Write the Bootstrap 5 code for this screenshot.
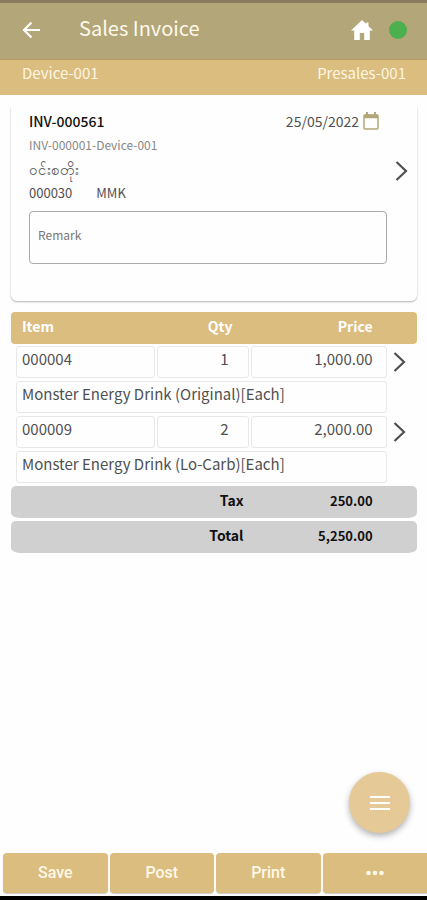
<!DOCTYPE html>
<html lang="en">
<head>
<meta charset="utf-8">
<meta name="viewport" content="width=device-width, initial-scale=1">
<title>Sales Invoice</title>
<link href="https://cdn.jsdelivr.net/npm/bootstrap@5.3.0/dist/css/bootstrap.min.css" rel="stylesheet">
<style>
  :root { --sand: #dcbd80; --olive: #b3a678; }
  body { font-family: "Noto Sans CJK SC", "Noto Sans", sans-serif; font-size: 15px; line-height: 20px; color: #505050; background: #fefefe; }
  svg { display: block; }
  .icon-btn { border: 0; background: none; padding: 0; color: inherit; }
  .app-bar { height: 60px; background: var(--olive); border-top: 3px solid #8a7b60; border-bottom: 1px solid #b39c68; color: #fff; padding: 0 20px 3px 20px; }
  .app-title { font-size: 20px; line-height: 28px; font-weight: 400; color: #fdf9ec; margin-left: 37px; padding-bottom: 3px; }
  .status-dot { width: 18px; height: 18px; background: #4caf50; }
  .device-bar { height: 35px; background: var(--sand); color: #fdf6e0; font-size: 15px; padding: 3px 21px 10px 22px; }
  .page-body { padding: 12px 10px 0 11px; }
  .invoice-card { border-radius: 0 0 6px 6px; box-shadow: 0 1px 2px rgba(0,0,0,.3); clip-path: inset(0 -4px -4px -4px); padding: 4px 30px 37px 18px; min-height: 193px; background: #fefefe; }
  .inv-no { font-size: 14px; font-weight: 500; color: #111; }
  .inv-date { font-size: 14px; }
  .inv-ref { font-size: 12px; color: #888; margin-top: 4px; }
  .inv-line { font-size: 13px; margin-top: 4px; }
  .inv-name { font-size: 15px; }
  .card-next { position: absolute; right: 9px; top: 54px; }
  .remark-box { height: 53px; border: 1px solid #aaa; border-radius: 4px; padding: 13px 8px; font-size: 12px; line-height: 20px; resize: none; background: transparent; margin-top: 8px; }
  .remark-box::placeholder { color: #777; }
  .items { table-layout: fixed; border-collapse: separate; border-spacing: 0; margin-top: 11px; }
  .items th, .items td { padding: 0; }
  .items thead th { height: 32px; background: var(--sand); color: #fff; font-size: 14px; font-weight: 700; padding-bottom: 4px; }
  .items thead th:first-child { border-radius: 4px 0 0 4px; padding-left: 11px; }
  .items thead th:last-child { border-radius: 0 4px 4px 0; }
  .items thead .th-qty { padding-right: 18px; }
  .items thead .th-price { padding-right: 16px; }
  .col-item { width: 36%; } .col-qty { width: 23%; } .col-price { width: 34%; }
  .items tbody td { padding: 2px 2px 1px 0; }
  .items tbody td:first-child { padding-left: 5px; }
  .cell-box { height: 32px; border: 1px solid #e8e8e8; border-radius: 3px; padding: 2px 13px 8px 5px; white-space: nowrap; }
  .qty-box { padding-right: 19px; }
  .items tfoot td, .items tfoot th { height: 35px; border-bottom: 3px solid #fefefe; background: #d0d0d0; background-clip: padding-box; color: #111; font-size: 13px; font-weight: 700; padding-bottom: 2px; }
  .items tfoot th { border-radius: 5px 0 0 8px; padding-right: 7px; font-size: 14px; padding-bottom: 4px; }
  .items tfoot td { padding-right: 16px; }
  .items tfoot td:last-child { border-radius: 0 5px 8px 0; padding: 0; }
  .items .tfoot-gap td { height: 2px; border: 0; background: none; padding: 0; }
  .menu-fab { width: 61px; height: 61px; background: #e5ca98; color: #fff; box-shadow: 0 3px 6px rgba(0,0,0,.3); margin: 0 17px 20px auto; }
  .action-bar { padding: 0 0 3px 3px; gap: 2px; border-bottom: 4px solid #000; }
  .action-btn { flex: 1 1 0; height: 40px; border: 0; border-radius: 4px; background: var(--sand); color: #fdf8e8; font-family: Roboto, sans-serif; font-size: 16px; font-weight: 500; box-shadow: 0 1px 1px rgba(0,0,0,.2); padding: 0; }
  .action-btn:last-child { border-radius: 4px 0 0 4px; }
</style>
</head>
<body class="d-flex flex-column min-vh-100">
<header>
  <div class="app-bar d-flex align-items-center">
    <button type="button" class="icon-btn" aria-label="Back">
      <svg width="22" height="20" viewBox="0 0 22 20" fill="none" stroke="currentColor" stroke-width="2.2"><path d="M20 10H4M11.500 2.500L4 10l7.500 7.500"/></svg>
    </button>
    <h1 class="app-title mb-0 me-auto">Sales Invoice</h1>
    <a href="#" class="text-white me-3" aria-label="Home">
      <svg width="22" height="20" viewBox="0 0 22 20" fill="currentColor"><path d="M11 0L0 10.500h3.200V20h5.600v-7h4.400v7h5.600v-9.500H22L17.500 6.200V2.500h-2.200v1.600z"/></svg>
    </a>
    <span class="status-dot rounded-circle"></span>
  </div>
  <div class="device-bar d-flex justify-content-between"><span>Device-001</span><span>Presales-001</span></div>
</header>
<main class="page-body">
  <section class="invoice-card position-relative">
    <div class="d-flex justify-content-between">
      <span class="inv-no">INV-000561</span>
      <span class="inv-date d-flex align-items-center gap-1 me-2">25/05/2022
        <svg width="16" height="18" viewBox="0 0 16 18" fill="none" stroke="#b3a678" stroke-width="1.500"><rect x="1" y="3" width="14" height="14" rx="1"/><path d="M1 4.500h14" stroke-width="3.500"/><path d="M4 0v3M12 0v3" stroke-width="2"/></svg>
      </span>
    </div>
    <div class="inv-ref">INV-000001-Device-001</div>
    <div class="inv-line inv-name" lang="my">ဝင်းစတိုး</div>
    <div class="inv-line d-flex gap-4"><span>000030</span><span>MMK</span></div>
    <textarea class="remark-box d-block w-100" placeholder="Remark" aria-label="Remark"></textarea>
    <button type="button" class="icon-btn card-next" aria-label="Open invoice details">
      <svg width="13" height="20" viewBox="0 0 13 20" fill="none" stroke="currentColor" stroke-width="2.200"><path d="M1.500 1L11 10l-9.500 9"/></svg>
    </button>
  </section>
  <table class="items w-100">
    <colgroup><col class="col-item"><col class="col-qty"><col class="col-price"><col></colgroup>
    <thead><tr><th scope="col">Item</th><th scope="col" class="th-qty text-end">Qty</th><th scope="col" class="th-price text-end">Price</th><th></th></tr></thead>
    <tbody>
      <tr>
        <td><div class="cell-box">000004</div></td><td><div class="cell-box qty-box text-end">1</div></td><td><div class="cell-box text-end">1,000.00</div></td>
        <td><button type="button" class="icon-btn d-block ms-1" aria-label="Open item 000004"><svg width="13" height="20" viewBox="0 0 13 20" fill="none" stroke="currentColor" stroke-width="2.200"><path d="M1.500 1L11 10l-9.500 9"/></svg></button></td>
      </tr>
      <tr><td colspan="3"><div class="cell-box">Monster Energy Drink (Original)[Each]</div></td><td></td></tr>
      <tr>
        <td><div class="cell-box">000009</div></td><td><div class="cell-box qty-box text-end">2</div></td><td><div class="cell-box text-end">2,000.00</div></td>
        <td><button type="button" class="icon-btn d-block ms-1" aria-label="Open item 000009"><svg width="13" height="20" viewBox="0 0 13 20" fill="none" stroke="currentColor" stroke-width="2.200"><path d="M1.500 1L11 10l-9.500 9"/></svg></button></td>
      </tr>
      <tr><td colspan="3"><div class="cell-box">Monster Energy Drink (Lo-Carb)[Each]</div></td><td></td></tr>
    </tbody>
    <tfoot>
      <tr class="tfoot-gap"><td colspan="4"></td></tr>
      <tr><th scope="row" colspan="2" class="text-end">Tax</th><td class="text-end">250.00</td><td></td></tr>
      <tr><th scope="row" colspan="2" class="text-end">Total</th><td class="text-end">5,250.00</td><td></td></tr>
    </tfoot>
  </table>
</main>
<footer class="mt-auto">
  <button type="button" class="menu-fab icon-btn rounded-circle d-flex align-items-center justify-content-center" aria-label="Menu">
    <svg width="20" height="14" viewBox="0 0 20 14" stroke="currentColor" stroke-width="2"><path d="M0 1h20M0 7h20M0 13h20"/></svg>
  </button>
  <div class="action-bar d-flex">
    <button type="button" class="action-btn">Save</button>
    <button type="button" class="action-btn">Post</button>
    <button type="button" class="action-btn">Print</button>
    <button type="button" class="action-btn d-flex align-items-center justify-content-center" aria-label="More">
      <svg width="18" height="6" viewBox="0 0 18 6" fill="currentColor"><circle cx="2.500" cy="3" r="2.300"/><circle cx="9" cy="3" r="2.300"/><circle cx="15.500" cy="3" r="2.300"/></svg>
    </button>
  </div>
</footer>
<script src="https://cdn.jsdelivr.net/npm/bootstrap@5.3.0/dist/js/bootstrap.bundle.min.js"></script>
</body>
</html>
